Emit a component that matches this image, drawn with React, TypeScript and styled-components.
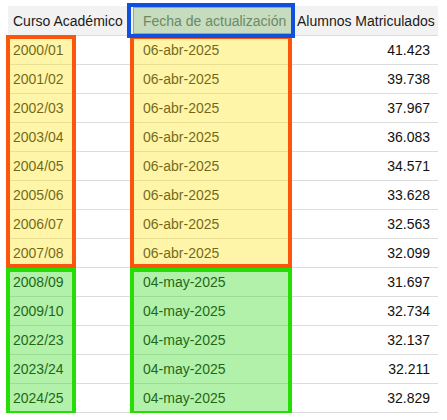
import React from 'react';
import styled, { createGlobalStyle } from 'styled-components';

const GlobalStyle = createGlobalStyle`
  html, body {
    margin: 0;
    padding: 0;
    background: #ffffff;
    font-family: "Liberation Sans", Arial, sans-serif;
  }
`;

const Page = styled.div`
  padding: 6px 9px 0 8px;
`;

const Table = styled.div`
  position: relative;
  width: 430px;
  font-size: 14px;
  color: #111;
`;

const Row = styled.div<{ $header?: boolean }>`
  display: grid;
  grid-template-columns: 125px 159px 146px;
  height: ${({ $header }) => ($header ? '30px' : '29px')};
  background: ${({ $header }) => ($header ? '#f2f2f2' : '#ffffff')};
  border-bottom: 1px solid #dcdcdc;
  box-sizing: border-box;
`;

const Cell = styled.div<{ $align?: 'left' | 'right' }>`
  display: flex;
  align-items: center;
  justify-content: ${({ $align }) => ($align === 'right' ? 'flex-end' : 'flex-start')};
  padding: 0 8px 0 5px;
  white-space: nowrap;
`;

const HeaderCell = styled(Cell)`
  color: #1a1a1a;
`;

const MarkedHeaderCell = styled(HeaderCell)`
  background: #c7dbbe;
  color: #6a8a66;
  border: 1px solid #a6a288;
  margin: 1px 0 1px 0;
`;

const Highlight = styled.div<{
  $left: number;
  $top: number;
  $width: number;
  $height: number;
  $line: string;
  $fill: string;
}>`
  position: absolute;
  left: ${({ $left }) => $left}px;
  top: ${({ $top }) => $top}px;
  width: ${({ $width }) => $width}px;
  height: ${({ $height }) => $height}px;
  border: 4px solid ${({ $line }) => $line};
  background: ${({ $fill }) => $fill};
  box-sizing: border-box;
  pointer-events: none;
`;

const ORANGE = '#fb560c';
const GREEN = '#26dd06';
const BLUE = '#0f51dc';
const YELLOW_FILL = 'rgba(255, 230, 40, 0.4)';
const GREEN_FILL = 'rgba(60, 220, 40, 0.4)';

const rows = [
  { curso: '2000/01', fecha: '06-abr-2025', alumnos: '41.423' },
  { curso: '2001/02', fecha: '06-abr-2025', alumnos: '39.738' },
  { curso: '2002/03', fecha: '06-abr-2025', alumnos: '37.967' },
  { curso: '2003/04', fecha: '06-abr-2025', alumnos: '36.083' },
  { curso: '2004/05', fecha: '06-abr-2025', alumnos: '34.571' },
  { curso: '2005/06', fecha: '06-abr-2025', alumnos: '33.628' },
  { curso: '2006/07', fecha: '06-abr-2025', alumnos: '32.563' },
  { curso: '2007/08', fecha: '06-abr-2025', alumnos: '32.099' },
  { curso: '2008/09', fecha: '04-may-2025', alumnos: '31.697' },
  { curso: '2009/10', fecha: '04-may-2025', alumnos: '32.734' },
  { curso: '2022/23', fecha: '04-may-2025', alumnos: '32.137' },
  { curso: '2023/24', fecha: '04-may-2025', alumnos: '32.211' },
  { curso: '2024/25', fecha: '04-may-2025', alumnos: '32.829' },
];

const App: React.FC = () => {
  return (
    <Page>
      <GlobalStyle />
      <Table>
        <Row $header>
          <HeaderCell>Curso Académico</HeaderCell>
          <MarkedHeaderCell style={{ paddingLeft: 9 }}>Fecha de actualización</MarkedHeaderCell>
          <HeaderCell>Alumnos Matriculados</HeaderCell>
        </Row>
        {rows.map(r => (
          <Row key={r.curso}>
            <Cell>{r.curso}</Cell>
            <Cell style={{ paddingLeft: 10 }}>{r.fecha}</Cell>
            <Cell $align="right">{r.alumnos}</Cell>
          </Row>
        ))}

        {/* annotation boxes */}
        <Highlight $left={-2} $top={29} $width={70} $height={233} $line={ORANGE} $fill={YELLOW_FILL} />
        <Highlight $left={-2} $top={262} $width={70} $height={147} $line={GREEN} $fill={GREEN_FILL} />
        <Highlight $left={122} $top={29} $width={162} $height={233} $line={ORANGE} $fill={YELLOW_FILL} />
        <Highlight $left={122} $top={262} $width={162} $height={147} $line={GREEN} $fill={GREEN_FILL} />
        <Highlight $left={119} $top={-3} $width={168} $height={35} $line={BLUE} $fill="transparent" />
      </Table>
    </Page>
  );
};

export default App;
